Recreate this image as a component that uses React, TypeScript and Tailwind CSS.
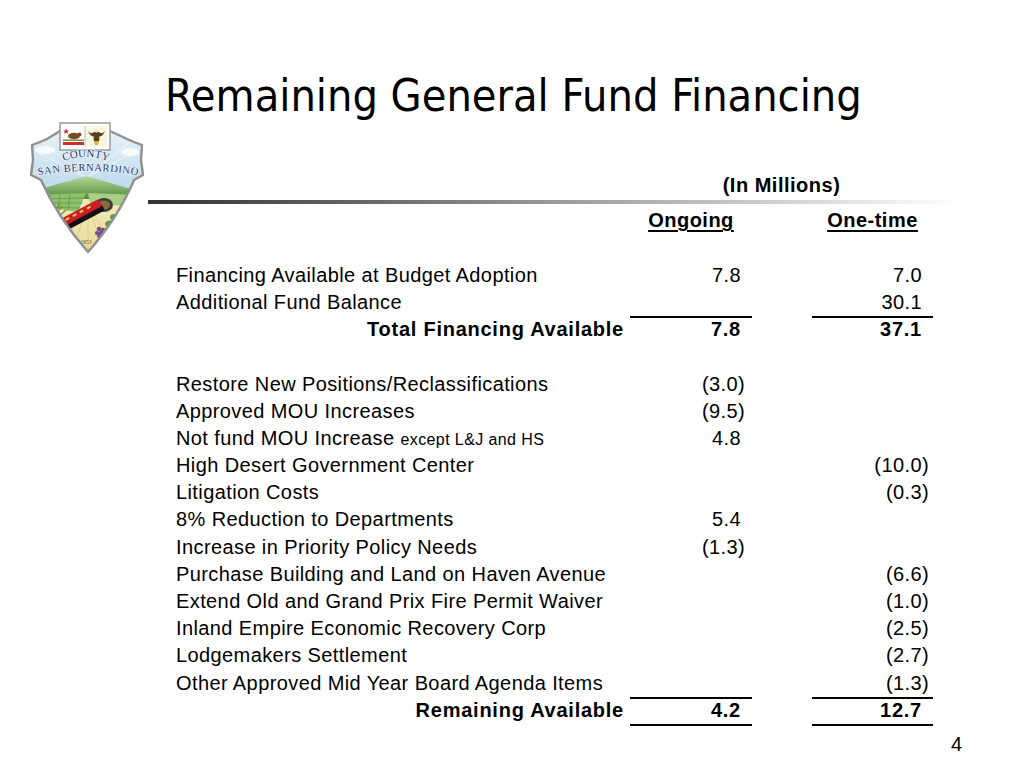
import React from 'react';

type Row = {
  label?: React.ReactNode;
  ong?: string;
  one?: string;
  bold?: boolean;
  line?: boolean;
  blank?: boolean;
};

const rows: Row[] = [
  { label: 'Financing Available at Budget Adoption', ong: '7.8', one: '7.0' },
  { label: 'Additional Fund Balance', one: '30.1', line: true },
  { label: 'Total Financing Available', ong: '7.8', one: '37.1', bold: true },
  { blank: true },
  { label: 'Restore New Positions/Reclassifications', ong: '(3.0)' },
  { label: 'Approved MOU Increases', ong: '(9.5)' },
  {
    label: (
      <>
        Not fund MOU Increase{' '}
        <span className="text-[16px] tracking-[0.4px]">except L&amp;J and HS</span>
      </>
    ),
    ong: '4.8',
  },
  { label: 'High Desert Government Center', one: '(10.0)' },
  { label: 'Litigation Costs', one: '(0.3)' },
  { label: '8% Reduction to Departments', ong: '5.4' },
  { label: 'Increase in Priority Policy Needs', ong: '(1.3)' },
  { label: 'Purchase Building and Land on Haven Avenue', one: '(6.6)' },
  { label: 'Extend Old and Grand Prix Fire Permit Waiver', one: '(1.0)' },
  { label: 'Inland Empire Economic Recovery Corp', one: '(2.5)' },
  { label: 'Lodgemakers Settlement', one: '(2.7)' },
  { label: 'Other Approved Mid Year Board Agenda Items', one: '(1.3)', line: true },
  { label: 'Remaining Available', ong: '4.2', one: '12.7', bold: true, line: true },
];

const outline =
  'M 60 131 L 47 139 L 40 142 L 32 145 L 33 160 L 31 175 L 41 180 Q 58 218 88 252 Q 118 218 134 180 L 143 175 L 141 160 L 142 145 L 134 142 L 127 139 L 110 131 Z';

function Logo() {
  return (
    <svg width="120" height="135" viewBox="26 120 120 135" className="block">
      <defs>
        <clipPath id="shieldClip">
          <path d={outline} />
        </clipPath>
        <linearGradient id="skyG" x1="0" y1="0" x2="0" y2="1">
          <stop offset="0" stopColor="#eef6fb" />
          <stop offset="1" stopColor="#b7d6ea" />
        </linearGradient>
        <linearGradient id="mtnG" x1="0" y1="0" x2="0" y2="1">
          <stop offset="0" stopColor="#b9d69a" />
          <stop offset="1" stopColor="#4f8a3c" />
        </linearGradient>
        <linearGradient id="groundG" x1="0" y1="0" x2="0" y2="1">
          <stop offset="0" stopColor="#f3ecc8" />
          <stop offset="1" stopColor="#e9d98f" />
        </linearGradient>
        <path id="arcCounty" d="M 61 162 Q 86 152 111 162" />
        <path id="arcSan" d="M 34 176 Q 88 166 142 176" />
      </defs>
      <g clipPath="url(#shieldClip)">
        <rect x="26" y="120" width="120" height="80" fill="url(#skyG)" />
        <g stroke="#ffffff" strokeWidth="0.8" opacity="0.7">
          <line x1="86" y1="178" x2="34" y2="150" />
          <line x1="86" y1="178" x2="40" y2="140" />
          <line x1="86" y1="178" x2="138" y2="150" />
          <line x1="86" y1="178" x2="132" y2="140" />
        </g>
        <ellipse cx="45" cy="150" rx="10" ry="4" fill="#ffffff" opacity="0.8" />
        <ellipse cx="130" cy="152" rx="9" ry="4" fill="#ffffff" opacity="0.8" />
        <rect x="26" y="190" width="120" height="70" fill="url(#groundG)" />
        <path
          d="M 28 193 C 50 186 70 181 86 176 C 100 180 120 186 146 193 L 146 199 L 28 199 Z"
          fill="url(#mtnG)"
        />
        <path d="M 34 195 L 86 193 L 78 212 L 44 207 Z" fill="#8fc16a" />
        <g stroke="#5d9a45" strokeWidth="0.8">
          <line x1="38" y1="199" x2="84" y2="198" />
          <line x1="40" y1="203" x2="82" y2="203" />
          <line x1="42" y1="207" x2="80" y2="208" />
          <line x1="50" y1="195" x2="48" y2="208" />
          <line x1="60" y1="195" x2="58" y2="209" />
          <line x1="70" y1="194" x2="68" y2="210" />
        </g>
        <path d="M 88 193 L 140 195 L 130 206 L 90 204 Z" fill="#a9cf85" />
        <g stroke="#d8c27a" strokeWidth="0.7">
          <line x1="88" y1="204" x2="60" y2="250" />
          <line x1="88" y1="204" x2="72" y2="252" />
          <line x1="88" y1="204" x2="88" y2="252" />
          <line x1="88" y1="204" x2="104" y2="252" />
          <line x1="88" y1="204" x2="116" y2="250" />
        </g>
        <g stroke="#6f8f35" strokeWidth="1.2" fill="none">
          <path d="M 50 222 Q 56 214 62 206" />
          <path d="M 54 226 Q 58 216 66 210" />
          <path d="M 47 216 Q 55 212 60 204" />
        </g>
        <ellipse cx="104" cy="205" rx="9" ry="7" fill="#3b3b3b" />
        <ellipse cx="104" cy="205" rx="6" ry="4.5" fill="#8a6a3a" />
        <g transform="rotate(-28 84 218)">
          <rect x="62" y="214" width="44" height="7" rx="2" fill="#111111" />
          <rect x="62" y="208" width="44" height="8" rx="3" fill="#c81e2a" />
          <rect x="67" y="210" width="4" height="2" fill="#f5d23c" />
          <rect x="75" y="210" width="4" height="2" fill="#f5d23c" />
          <rect x="83" y="210" width="4" height="2" fill="#f5d23c" />
          <rect x="91" y="210" width="4" height="2" fill="#f5d23c" />
        </g>
        <g fill="#6d4a8c">
          <circle cx="99" cy="229" r="2.2" />
          <circle cx="103" cy="230" r="2.2" />
          <circle cx="101" cy="233" r="2.2" />
          <circle cx="97" cy="233" r="2" />
          <circle cx="99" cy="236" r="2" />
        </g>
        <g fill="#5f9b3f">
          <ellipse cx="110" cy="224" rx="5" ry="3.5" />
          <ellipse cx="114" cy="217" rx="4" ry="3" />
          <ellipse cx="106" cy="232" rx="3.5" ry="2.5" />
        </g>
        <text
          x="86"
          y="244"
          fontSize="5.5"
          fill="#6b4a2a"
          textAnchor="middle"
          fontFamily="'Liberation Serif', serif"
        >
          1853
        </text>
      </g>
      <path d={outline} fill="none" stroke="#8f8f8f" strokeWidth="2.4" strokeLinejoin="round" />
      <rect x="60" y="123" width="50" height="27" fill="#ffffff" stroke="#9a9a9a" strokeWidth="1.5" />
      <rect x="63" y="126" width="21" height="21" fill="#ffffff" />
      <path d="M 66 128.5 l 0.9 2 2.1 0.1 -1.7 1.3 0.6 2 -1.9 -1.2 -1.8 1.2 0.6 -2 -1.7 -1.3 2.1 -0.1 Z" fill="#d02a2a" />
      <ellipse cx="74" cy="136" rx="6" ry="3.2" fill="#7a4a26" />
      <circle cx="79.5" cy="134.5" r="2" fill="#7a4a26" />
      <rect x="63" y="142" width="21" height="3" fill="#d02a2a" />
      <rect x="63" y="139.5" width="21" height="1.5" fill="#5f9b3f" />
      <line x1="85" y1="126" x2="85" y2="147" stroke="#aaaaaa" strokeWidth="0.8" />
      <rect x="86" y="126" width="21" height="21" fill="#fbf6e0" />
      <path d="M 88 131 Q 92 140 96.5 134 Q 101 140 105 131 Q 101 136 96.5 130 Q 92 136 88 131 Z" fill="#5a3d22" />
      <ellipse cx="96.5" cy="138" rx="3" ry="5" fill="#5a3d22" />
      <circle cx="96.5" cy="131" r="1.7" fill="#e8e0c8" />
      <path d="M 94 141 L 99 141 L 98 145 L 95 145 Z" fill="#d9b23a" />
      <text
        fontSize="11"
        fill="#23336c"
        stroke="#ffffff"
        strokeWidth="0.9"
        paintOrder="stroke"
        fontFamily="'Liberation Serif', serif"
      >
        <textPath href="#arcCounty" startOffset="50%" textAnchor="middle">
          COUNTY
        </textPath>
      </text>
      <text
        x="89"
        y="165.2"
        fontSize="2.8"
        fill="#23336c"
        textAnchor="middle"
        fontFamily="'Liberation Serif', serif"
      >
        OF
      </text>
      <text
        fontSize="10.6"
        fill="#23336c"
        stroke="#ffffff"
        strokeWidth="0.9"
        paintOrder="stroke"
        fontFamily="'Liberation Serif', serif"
      >
        <textPath href="#arcSan" startOffset="50%" textAnchor="middle" textLength="100">
          SAN BERNARDINO
        </textPath>
      </text>
    </svg>
  );
}

export default function App() {
  return (
    <div className="w-[1024px] h-[768px] bg-white text-black overflow-hidden font-['Liberation_Sans',Arial,sans-serif]">
      <h1 className="pl-[165px] pt-[74px] h-[118px] text-[44.6px] leading-[44px] font-normal whitespace-nowrap font-['DejaVu_Sans_Condensed','DejaVu_Sans',sans-serif] [font-stretch:condensed]">
        Remaining General Fund Financing
      </h1>
      <div className="flex">
        <div className="ml-[26px] mt-[2px] w-[120px] shrink-0">
          <Logo />
        </div>
        <div className="ml-[2px] flex-1">
          <div className="mt-[54.4px] ml-[28px] grid grid-cols-[454px_303px] h-[27.2px] leading-[27.2px]">
            <div />
            <div className="text-center text-[20px] font-bold tracking-[0.5px]">(In Millions)</div>
          </div>
          <div className="h-[4px] w-[812px] bg-linear-to-r from-[#333333] via-[#9a9a9a] to-white" />
          <div className="mt-[3.8px] ml-[28px] grid grid-cols-[454px_122px_60px_121px] h-[27.2px] leading-[27.2px] text-[20px] font-bold tracking-[0.5px]">
            <div />
            <div className="text-center">
              <span className="underline underline-offset-[3px] decoration-[1.5px]">Ongoing</span>
            </div>
            <div />
            <div className="text-center">
              <span className="underline underline-offset-[3px] decoration-[1.5px]">One-time</span>
            </div>
          </div>
          <div className="h-[27.2px]" />
          <div className="ml-[28px] text-[20px]">
            {rows.map((r, i) =>
              r.blank ? (
                <div key={i} className="h-[27.2px]" />
              ) : (
                <div
                  key={i}
                  className={`grid grid-cols-[454px_122px_60px_121px] h-[27.2px] leading-[27.2px] whitespace-nowrap ${
                    r.bold ? 'font-bold tracking-[0.75px]' : 'tracking-[0.4px]'
                  }`}
                >
                  <div className={r.bold ? 'text-right pr-[6px]' : ''}>{r.label}</div>
                  <div
                    className={`text-right ${
                      r.ong && r.ong.startsWith('(') ? 'pr-[7px]' : 'pr-[11px]'
                    } ${r.line ? 'border-b-2 border-black' : ''}`}
                  >
                    {r.ong ?? ''}
                  </div>
                  <div />
                  <div
                    className={`text-right ${
                      r.one && r.one.startsWith('(') ? 'pr-[4px]' : 'pr-[11px]'
                    } ${r.line ? 'border-b-2 border-black' : ''}`}
                  >
                    {r.one ?? ''}
                  </div>
                </div>
              )
            )}
          </div>
          <div className="mt-[7px] h-[27.2px] leading-[27.2px] w-[814px] text-right text-[20px]">4</div>
        </div>
      </div>
    </div>
  );
}
